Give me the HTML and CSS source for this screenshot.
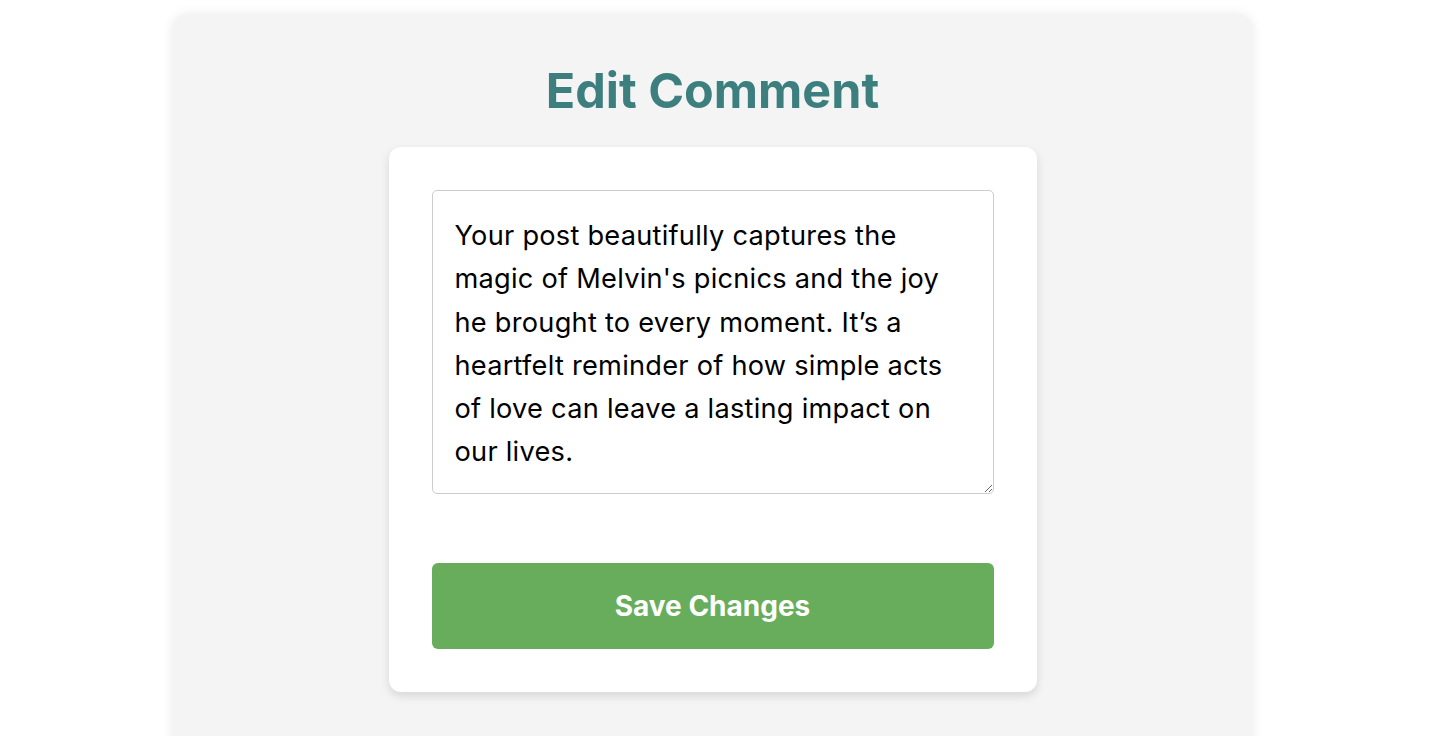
FILE: index.html
```html
<!DOCTYPE html>
<html lang="en">
<head>
<meta charset="utf-8">
<title>Edit Comment</title>
<link rel="stylesheet" href="styles.css">
</head>
<body>
<main class="page">
  <h1 class="title">Edit Comment</h1>
  <form class="card">
    <textarea class="comment">Your post beautifully captures the magic of Melvin's picnics and the joy he brought to every moment. It’s a heartfelt reminder of how simple acts of love can leave a lasting impact on our lives.</textarea>
    <button type="button" class="save">Save Changes</button>
  </form>
</main>
</body>
</html>
```
FILE: styles.css
```css
html, body {
  margin: 0;
  padding: 0;
  background: #ffffff;
}
body {
  font-family: Inter, "Noto Sans", "Liberation Sans", sans-serif;
  overflow: hidden;
  height: 736px;
}
.page {
  box-sizing: border-box;
  width: 1081px;
  min-height: 760px;
  margin: 14px 0 0 172px;
  padding: 20px 20px 40px;
  background: #f4f4f4;
  border-radius: 16px;
  box-shadow: 0 0 12px rgba(0, 0, 0, 0.08);
  display: flex;
  flex-direction: column;
  align-items: center;
}
.title {
  margin: 28px 0 27px;
  font-size: 48.5px;
  line-height: 1.2;
  font-weight: 700;
  color: #3d7f7e;
  text-align: center;
}
.card {
  box-sizing: border-box;
  width: 648px;
  padding: 43px;
  background: #ffffff;
  border-radius: 12px;
  box-shadow: 0 4px 10px rgba(0, 0, 0, 0.12);
  display: flex;
  flex-direction: column;
  gap: 69px;
}
.comment {
  box-sizing: border-box;
  width: 100%;
  height: 304px;
  padding: 23px 40px 20px 22px;
  border: 1px solid #cccccc;
  border-radius: 5px;
  font-family: Inter, "Noto Sans", "Liberation Sans", sans-serif;
  font-size: 27.2px;
  letter-spacing: 0.25px;
  line-height: 43.2px;
  color: #000000;
  resize: vertical;
  overflow: hidden;
}
.save {
  height: 86px;
  border: none;
  border-radius: 6px;
  background: #68ad5c;
  color: #ffffff;
  font-family: Inter, "Noto Sans", "Liberation Sans", sans-serif;
  font-size: 28px;
  font-weight: 700;
  cursor: pointer;
}
```
